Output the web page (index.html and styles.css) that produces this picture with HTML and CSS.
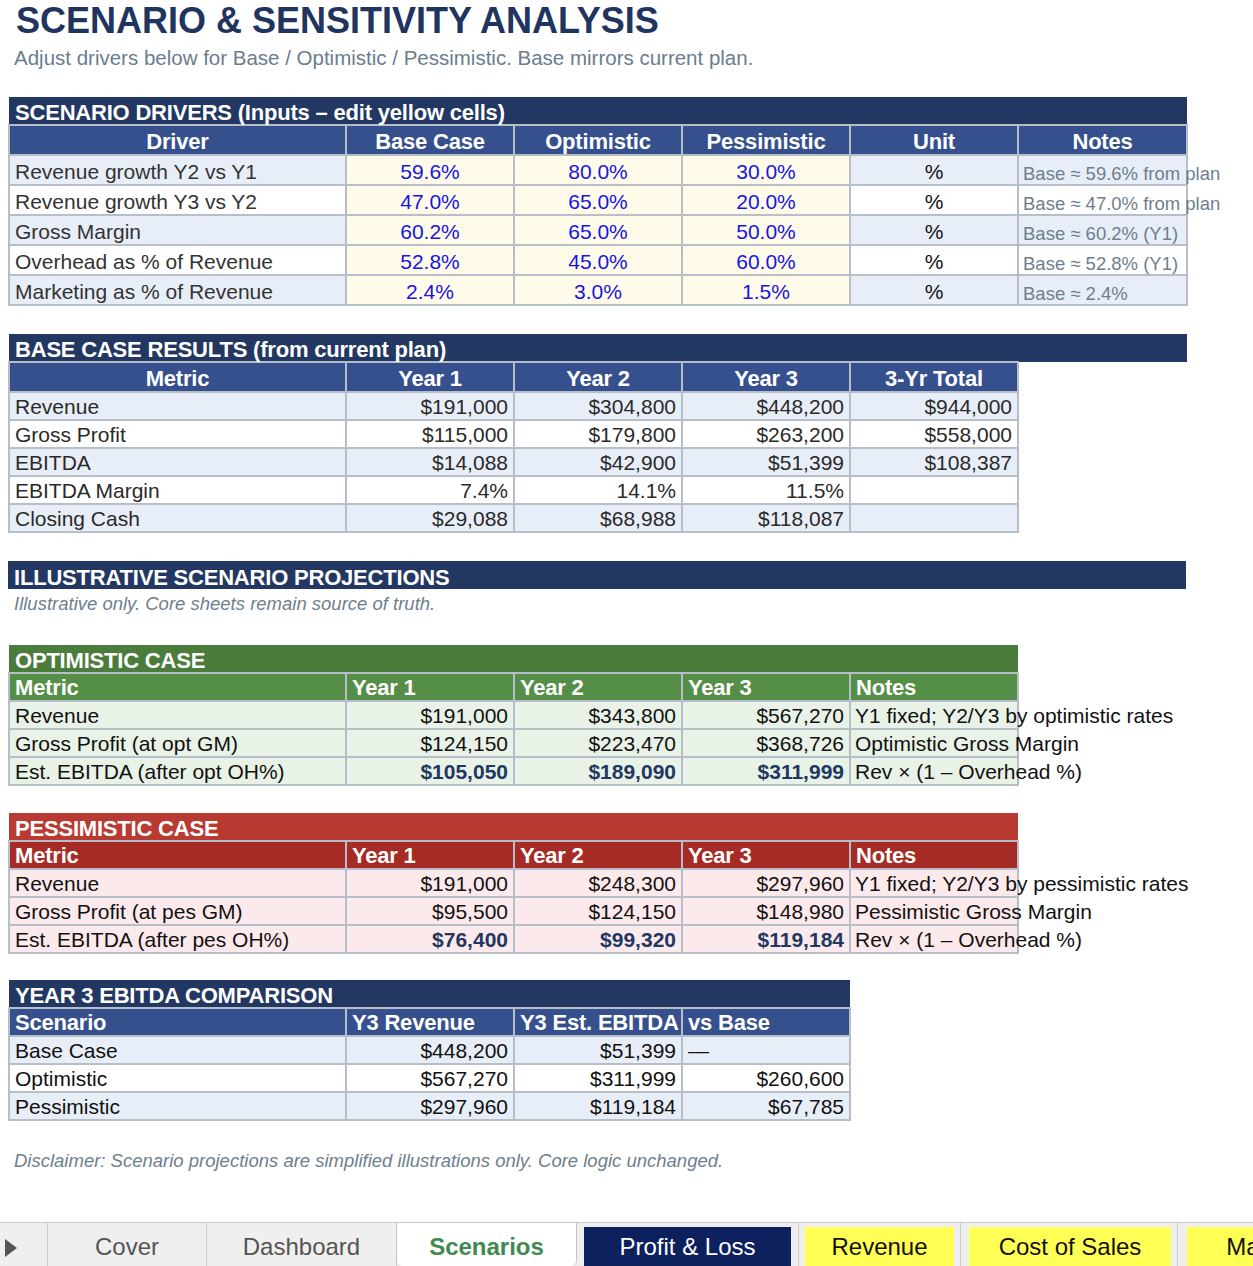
FILE: index.html
```html
<!DOCTYPE html>
<html lang="en">
<head>
<meta charset="utf-8">
<title>Scenario &amp; Sensitivity Analysis</title>
<link rel="stylesheet" href="styles.css">
</head>
<body>
<div class="page">
  <main class="sheet">
    <h1 class="title">SCENARIO &amp; SENSITIVITY ANALYSIS</h1>
    <p class="subtitle">Adjust drivers below for Base / Optimistic / Pessimistic. Base mirrors current plan.</p>

    <table class="tbl w6 drivers">
      <colgroup><col class="ca"><col class="cn"><col class="cn"><col class="cn"><col class="cn"><col class="cf"></colgroup>
      <tr class="bar-row"><td class="bar navy" colspan="6">SCENARIO DRIVERS (Inputs – edit yellow cells)</td></tr>
      <tr class="h30 head blue"><th>Driver</th><th>Base Case</th><th>Optimistic</th><th>Pessimistic</th><th>Unit</th><th>Notes</th></tr>
      <tr class="h30 alt"><td class="lbl">Revenue growth Y2 vs Y1</td><td class="in">59.6%</td><td class="in">80.0%</td><td class="in">30.0%</td><td class="unit">%</td><td class="note">Base ≈ 59.6% from plan</td></tr>
      <tr class="h30"><td class="lbl">Revenue growth Y3 vs Y2</td><td class="in">47.0%</td><td class="in">65.0%</td><td class="in">20.0%</td><td class="unit">%</td><td class="note">Base ≈ 47.0% from plan</td></tr>
      <tr class="h30 alt"><td class="lbl">Gross Margin</td><td class="in">60.2%</td><td class="in">65.0%</td><td class="in">50.0%</td><td class="unit">%</td><td class="note">Base ≈ 60.2% (Y1)</td></tr>
      <tr class="h30"><td class="lbl">Overhead as % of Revenue</td><td class="in">52.8%</td><td class="in">45.0%</td><td class="in">60.0%</td><td class="unit">%</td><td class="note">Base ≈ 52.8% (Y1)</td></tr>
      <tr class="h30 alt"><td class="lbl">Marketing as % of Revenue</td><td class="in">2.4%</td><td class="in">3.0%</td><td class="in">1.5%</td><td class="unit">%</td><td class="note">Base ≈ 2.4%</td></tr>
    </table>

    <table class="tbl w6 results">
      <colgroup><col class="ca"><col class="cn"><col class="cn"><col class="cn"><col class="cn"><col class="cf"></colgroup>
      <tr class="bar-row"><td class="bar navy" colspan="6">BASE CASE RESULTS (from current plan)</td></tr>
      <tr class="h30 head blue"><th>Metric</th><th>Year 1</th><th>Year 2</th><th>Year 3</th><th>3-Yr Total</th><td class="void"></td></tr>
      <tr class="h28 alt"><td class="lbl">Revenue</td><td class="num">$191,000</td><td class="num">$304,800</td><td class="num">$448,200</td><td class="num">$944,000</td><td class="void"></td></tr>
      <tr class="h28"><td class="lbl">Gross Profit</td><td class="num">$115,000</td><td class="num">$179,800</td><td class="num">$263,200</td><td class="num">$558,000</td><td class="void"></td></tr>
      <tr class="h28 alt"><td class="lbl">EBITDA</td><td class="num">$14,088</td><td class="num">$42,900</td><td class="num">$51,399</td><td class="num">$108,387</td><td class="void"></td></tr>
      <tr class="h28"><td class="lbl">EBITDA Margin</td><td class="num">7.4%</td><td class="num">14.1%</td><td class="num">11.5%</td><td class="num"></td><td class="void"></td></tr>
      <tr class="h28 alt"><td class="lbl">Closing Cash</td><td class="num">$29,088</td><td class="num">$68,988</td><td class="num">$118,087</td><td class="num"></td><td class="void"></td></tr>
    </table>

    <section class="illus">
      <div class="bar navy block-bar">ILLUSTRATIVE SCENARIO PROJECTIONS</div>
      <p class="italic-note">Illustrative only. Core sheets remain source of truth.</p>
    </section>

    <table class="tbl w5 case opt">
      <colgroup><col class="ca"><col class="cn"><col class="cn"><col class="cn"><col class="cn"></colgroup>
      <tr class="bar-row"><td class="bar" colspan="5">OPTIMISTIC CASE</td></tr>
      <tr class="h28 head left"><th>Metric</th><th>Year 1</th><th>Year 2</th><th>Year 3</th><th>Notes</th></tr>
      <tr class="h28"><td class="lbl">Revenue</td><td class="num">$191,000</td><td class="num">$343,800</td><td class="num">$567,270</td><td class="cnote">Y1 fixed; Y2/Y3 by optimistic rates</td></tr>
      <tr class="h28"><td class="lbl">Gross Profit (at opt GM)</td><td class="num">$124,150</td><td class="num">$223,470</td><td class="num">$368,726</td><td class="cnote">Optimistic Gross Margin</td></tr>
      <tr class="h28"><td class="lbl">Est. EBITDA (after opt OH%)</td><td class="num em">$105,050</td><td class="num em">$189,090</td><td class="num em">$311,999</td><td class="cnote">Rev × (1 – Overhead %)</td></tr>
    </table>

    <table class="tbl w5 case pes">
      <colgroup><col class="ca"><col class="cn"><col class="cn"><col class="cn"><col class="cn"></colgroup>
      <tr class="bar-row"><td class="bar" colspan="5">PESSIMISTIC CASE</td></tr>
      <tr class="h28 head left"><th>Metric</th><th>Year 1</th><th>Year 2</th><th>Year 3</th><th>Notes</th></tr>
      <tr class="h28"><td class="lbl">Revenue</td><td class="num">$191,000</td><td class="num">$248,300</td><td class="num">$297,960</td><td class="cnote">Y1 fixed; Y2/Y3 by pessimistic rates</td></tr>
      <tr class="h28"><td class="lbl">Gross Profit (at pes GM)</td><td class="num">$95,500</td><td class="num">$124,150</td><td class="num">$148,980</td><td class="cnote">Pessimistic Gross Margin</td></tr>
      <tr class="h28"><td class="lbl">Est. EBITDA (after pes OH%)</td><td class="num em">$76,400</td><td class="num em">$99,320</td><td class="num em">$119,184</td><td class="cnote">Rev × (1 – Overhead %)</td></tr>
    </table>

    <table class="tbl w4 comp">
      <colgroup><col class="ca"><col class="cn"><col class="cn"><col class="cn"></colgroup>
      <tr class="bar-row"><td class="bar navy" colspan="4">YEAR 3 EBITDA COMPARISON</td></tr>
      <tr class="h28 head blue left"><th>Scenario</th><th>Y3 Revenue</th><th>Y3 Est. EBITDA</th><th>vs Base</th></tr>
      <tr class="h28 alt"><td class="lbl">Base Case</td><td class="num">$448,200</td><td class="num">$51,399</td><td class="lbl">—</td></tr>
      <tr class="h28"><td class="lbl">Optimistic</td><td class="num">$567,270</td><td class="num">$311,999</td><td class="num">$260,600</td></tr>
      <tr class="h28 alt"><td class="lbl">Pessimistic</td><td class="num">$297,960</td><td class="num">$119,184</td><td class="num">$67,785</td></tr>
    </table>

    <p class="italic-note disclaimer">Disclaimer: Scenario projections are simplified illustrations only. Core logic unchanged.</p>
  </main>

  <nav class="tabs">
    <div class="tab-nav"><svg width="14" height="20" viewBox="0 0 14 20"><polygon points="1,1 13,10 1,19" fill="#555"/></svg></div>
    <div class="tab t-cover">Cover</div>
    <div class="tab t-dash">Dashboard</div>
    <div class="tab active t-scen">Scenarios</div>
    <div class="tab slot t-pl"><span class="chip chip-navy">Profit &amp; Loss</span></div>
    <div class="tab slot t-rev"><span class="chip chip-yellow">Revenue</span></div>
    <div class="tab slot t-cos"><span class="chip chip-yellow">Cost of Sales</span></div>
    <div class="tab slot t-ma"><span class="chip chip-yellow">Marketing</span></div>
  </nav>
</div>
</body>
</html>
```

FILE: styles.css
```css
* { box-sizing: border-box; }

body {
  margin: 0;
  background: #ffffff;
  font-family: "Liberation Sans", Arial, Helvetica, sans-serif;
  color: #222;
}

.page {
  height: 1266px;
  display: flex;
  flex-direction: column;
  overflow: hidden;
}

.sheet {
  flex: 1;
  padding-left: 8px;
}

.title {
  margin: 0;
  padding-left: 8px;
  font-size: 36px;
  line-height: 41px;
  font-weight: 700;
  color: #1F3560;
}

.subtitle {
  margin: 5px 0 0;
  padding-left: 6px;
  font-size: 20.5px;
  line-height: 24px;
  color: #6B7C8E;
}

/* ---------- spreadsheet tables ---------- */
.tbl {
  border-collapse: collapse;
  table-layout: fixed;
  margin-top: 28px;
}
.drivers { margin-top: 27px; }

.w6 { width: 1178px; }
.w5 { width: 1009px; }
.w4 { width: 841px; }

.ca { width: 337px; }
.cn { width: 168px; }
.cf { width: 169px; }

.tbl td,
.tbl th {
  border: 2px solid #B6BFC9;
  padding: 0 5px 0 5px;
  white-space: nowrap;
  overflow: visible;
  vertical-align: bottom;
  font-size: 21px;
  line-height: 24px;
  font-weight: 400;
}

.bar-row { height: 28px; }
.h28 { height: 28px; }
.h30 { height: 30px; }

.tbl td.bar,
.bar {
  border: none;
  color: #ffffff;
  font-weight: 700;
  font-size: 22px;
  line-height: 22px;
  padding: 0 6px;
  letter-spacing: -0.2px;
}
.tbl td.bar.navy,
.bar.navy { background: #223762; }

.head th {
  color: #ffffff;
  font-weight: 700;
  font-size: 22px;
  text-align: center;
  letter-spacing: -0.2px;
}
.head.left th { text-align: left; }
.head.blue th { background: #35508D; }

.tbl td.void {
  border: none;
  background: transparent;
}

.lbl { text-align: left; }
.num { text-align: right; }

/* drivers */
.drivers td { color: #333; }
.drivers tr td { background: #ffffff; }
.drivers tr.alt td { background: #E8EEF7; }
.drivers td.in,
.drivers tr.alt td.in {
  background: #FFFBE8;
  color: #1515E6;
  text-align: center;
}
.drivers td.unit { text-align: center; color: #111; }
.drivers td.note {
  color: #6E7E8E;
  font-size: 18.5px;
  line-height: 20px;
  padding-left: 4px;
}

/* results */
.results td { color: #2a2a2a; background: #ffffff; }
.results tr.alt td { background: #E8EEF7; }
.results tr td.void { background: transparent; }

/* illustrative */
.illus { margin-top: 28px; width: 1178px; }
.block-bar { height: 28px; display: flex; align-items: flex-end; }
.italic-note {
  margin: 0;
  height: 28px;
  padding: 0 6px;
  font-style: italic;
  font-size: 18.5px;
  line-height: 30px;
  color: #6E7E8E;
}
.illus .italic-note { margin-bottom: 28px; }

/* cases */
.case { margin-top: 0; }
.case td { color: #111; }
.case td.em { font-weight: 700; color: #223762; }
.case td.cnote { padding-left: 4px; }

.opt td.bar { background: #4A7D3C; }
.opt .head th { background: #558F47; }
.opt td { background: #E8F2E6; }

.pes { margin-top: 27px; }
.pes td.bar { background: #B93A33; }
.pes .head th { background: #A72B25; }
.pes td { background: #FCE9EB; }

/* comparison */
.comp { margin-top: 26px; }
.comp td { color: #111; background: #ffffff; }
.comp tr.alt td { background: #E8EEF7; }

.disclaimer { margin-top: 26px; line-height: 28px; }

/* ---------- sheet tabs ---------- */
.tabs {
  flex: 0 0 44px;
  display: flex;
  background: #EFEFEF;
  border-top: 1px solid #C9C9C9;
  overflow: hidden;
  white-space: nowrap;
}

.tab-nav {
  flex: 0 0 48px;
  display: flex;
  align-items: center;
  padding: 6px 0 0 4px;
  border-right: 1px solid #CCCCCC;
}

.tab {
  flex: 0 0 auto;
  font-size: 24px;
  line-height: 47px;
  text-align: center;
  color: #555;
  border-right: 1px solid #CCCCCC;
}
.t-cover { width: 159px; }
.t-dash { width: 190px; }
.t-scen {
  width: 181px;
  background: #ffffff;
  color: #3E8A4E;
  font-weight: 700;
  border-left: 1px solid #C4C4C4;
  border-right: 1px solid #C4C4C4;
  border-radius: 0 0 5px 5px;
  margin-left: -1px;
}

.slot {
  padding: 4px 7px 0 7px;
  display: flex;
}
.t-pl { width: 222px; }
.t-rev { width: 162px; padding-left: 6px; padding-right: 6px; }
.t-cos { width: 217px; padding-left: 8px; padding-right: 6px; }
.t-ma { width: 200px; padding-left: 9px; border-right: none; }

.chip {
  flex: 1;
  display: block;
  line-height: 40px;
  padding-top: 0;
}
.chip-navy { background: #0C215E; color: #ffffff; }
.chip-yellow { background: #FFFF55; color: #111; }
```
